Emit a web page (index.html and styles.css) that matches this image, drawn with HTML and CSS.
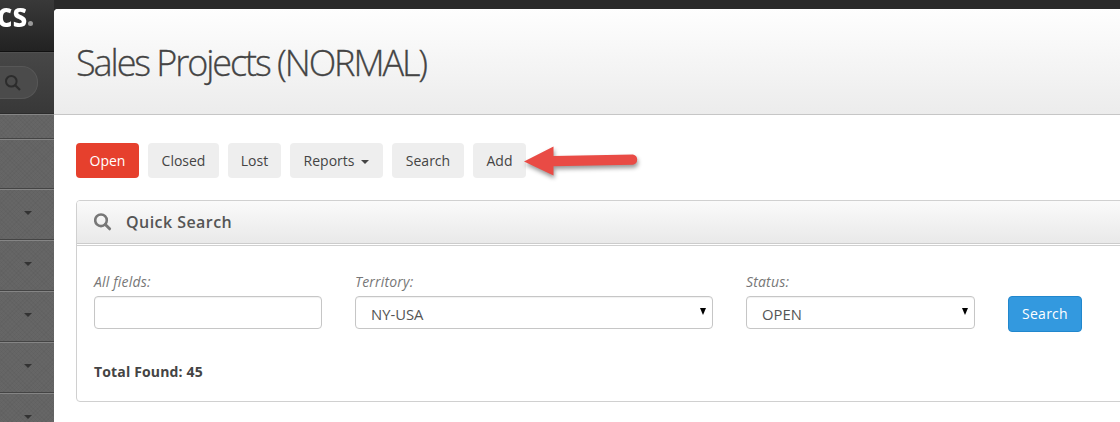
FILE: index.html
```html
<!DOCTYPE html>
<html lang="en">
<head>
<meta charset="utf-8">
<title>Sales Projects</title>
<link rel="stylesheet" href="styles.css">
</head>
<body>
<aside class="sidebar">
  <div class="brand"><span class="brand-name">cs</span><span class="brand-dot"></span></div>
  <div class="side-search">
    <div class="side-pill">
      <svg width="18" height="18" viewBox="0 0 18 18"><circle cx="7.3" cy="7.3" r="5.3" fill="none" stroke="#2c2c2c" stroke-width="2"/><path d="M11.2 11.2L16 16" stroke="#2c2c2c" stroke-width="2.2"/></svg>
    </div>
  </div>
  <nav class="side-nav">
    <div class="side-item side-item-first"></div>
    <div class="side-item side-item-short"></div>
    <div class="side-item"><i class="side-caret"></i></div>
    <div class="side-item"><i class="side-caret"></i></div>
    <div class="side-item"><i class="side-caret"></i></div>
    <div class="side-item"><i class="side-caret"></i></div>
    <div class="side-item"><i class="side-caret"></i></div>
  </nav>
</aside>
<main class="content">
  <header class="page-header"><h1 class="page-title">Sales Projects (NORMAL)</h1></header>
  <div class="toolbar">
    <a class="btn btn-active w-open">Open</a>
    <a class="btn w-closed">Closed</a>
    <a class="btn w-lost">Lost</a>
    <a class="btn w-reports">Reports<i class="caret"></i></a>
    <a class="btn w-search">Search</a>
    <a class="btn w-add">Add
      <svg class="arrow" width="120" height="40" viewBox="0 0 120 40"><path d="M1 18.5L30.500 3.500V13.100L110 11.500A5.200 5.200 0 0 1 110 21.700L30.500 23.200V32.500Z" fill="#e94b45"/></svg>
    </a>
  </div>
  <section class="panel">
    <div class="panel-head">
      <svg class="panel-icon" width="18" height="18" viewBox="0 0 18 18"><circle cx="7" cy="7.300" r="5.800" fill="none" stroke="#777" stroke-width="2.600"/><path d="M11.300 11.500L15.600 15.800" stroke="#777" stroke-width="3" stroke-linecap="round"/></svg>
      <span class="panel-title">Quick Search</span>
    </div>
    <div class="panel-body">
      <div class="fields">
        <div class="field f-all"><span class="label">All fields:</span><div class="control"></div></div>
        <div class="field f-territory"><span class="label">Territory:</span><div class="control"><span class="value">NY-USA</span><i class="tri"></i></div></div>
        <div class="field f-status"><span class="label">Status:</span><div class="control"><span class="value">OPEN</span><i class="tri"></i></div></div>
        <button class="submit">Search</button>
      </div>
      <div class="total">Total Found: 45</div>
    </div>
  </section>
</main>
</body>
</html>
```
FILE: styles.css
```css
* { box-sizing: border-box; }
body {
  margin: 0;
  height: 422px;
  overflow: hidden;
  display: flex;
  background: #292929;
  font: 14px/20px "Open Sans", "Noto Sans", sans-serif;
  color: #444;
}
.sidebar { width: 54px; height: 422px; flex: none; overflow: hidden; }
.brand {
  height: 52px;
  display: flex;
  align-items: flex-start;
  background: linear-gradient(#393939, #222);
  border-bottom: 1px solid #111;
  color: #fff;
}
.brand-name {
  width: 32px;
  margin-left: -3px;
  font-size: 34px;
  line-height: 28px;
  font-weight: 700;
  transform: scaleX(.88);
  transform-origin: left;
}
.brand-dot { width: 5px; height: 5px; margin: 21px 0 0 -1px; border-radius: 50%; background: #999; }
.side-search {
  height: 62px;
  padding-top: 13px;
  background: linear-gradient(#474747, #383838);
  border-top: 1px solid #505050;
  border-bottom: 1px solid #2c2c2c;
}
.side-pill {
  width: 38px;
  height: 33px;
  padding: 7px 0 0 4px;
  background: #4b4b4b;
  border: 1px solid #575757;
  border-left: 0;
  border-radius: 0 16px 16px 0;
}
.side-pill svg { display: block; }
.side-nav {
  background-color: #666;
  background-image: repeating-linear-gradient(45deg, rgba(0,0,0,.03) 0 1px, transparent 1px 3px), repeating-linear-gradient(-45deg, rgba(0,0,0,.03) 0 1px, transparent 1px 3px);
}
.side-item {
  height: 51px;
  border-top: 1px solid #858585;
  border-bottom: 1px solid #444;
  padding: 21px 0 0 24px;
}
.side-item-first { height: 25px; padding: 0; }
.side-item-short { height: 50px; }
.side-caret { display: block; width: 8px; border: 4px solid transparent; border-top-color: #333; border-bottom: 0; }
.content {
  flex: 1;
  min-width: 0;
  height: 413px;
  margin-top: 9px;
  background: #fff;
  border-top-left-radius: 4px;
  overflow: hidden;
}
.page-header {
  height: 106px;
  padding: 29px 0 0 22px;
  background: linear-gradient(#fefefe, #ececec);
  border-bottom: 1px solid #c6c6c6;
}
.page-title { margin: 0; font-size: 36px; line-height: 49px; font-weight: 300; letter-spacing: -2.07px; white-space: nowrap; -webkit-text-stroke: .3px #444; }
.toolbar { display: flex; padding: 28px 0 0 22px; }
.btn {
  position: relative;
  height: 35px;
  line-height: 35px;
  margin-right: 9px;
  text-align: center;
  border-radius: 4px;
  background: #eee;
}
.btn-active { background: #e6402d; color: #fff; }
.w-open { width: 63px; }
.w-closed { width: 71px; }
.w-lost { width: 53px; }
.w-reports { width: 93px; }
.w-search { width: 72px; }
.w-add { width: 53px; }
.caret { display: inline-block; margin-left: 7px; vertical-align: 2px; border: 4px solid transparent; border-top-color: #444; border-bottom: 0; }
.arrow { position: absolute; left: 50px; top: 0; filter: drop-shadow(1px 3px 2px rgba(0,0,0,.4)); }
.panel { margin: 22px -4px 0 22px; border: 1px solid #d0d0d0; border-radius: 4px; height: 202px; }
.panel-head {
  height: 43px;
  display: flex;
  align-items: center;
  padding-left: 17px;
  background: linear-gradient(#fafafa, #e9e9e9);
  border-bottom: 1px solid #ccc;
  border-radius: 3px 3px 0 0;
}
.panel-icon { margin-right: 14px; }
.panel-title { font-size: 16px; font-weight: 600; letter-spacing: .45px; color: #555; }
.panel-body { margin-top: 1px; padding: 26px 0 0 17px; border-top: 1px solid #d0d0d0; }
.fields { display: flex; align-items: flex-end; height: 60px; }
.field { margin-right: 33px; height: 60px; }
.f-all { width: 228px; }
.f-territory { width: 358px; }
.f-status { width: 229px; }
.label { display: block; height: 24px; font-style: italic; letter-spacing: .18px; color: #777; }
.control {
  height: 33px;
  display: flex;
  justify-content: space-between;
  padding: 7px 6px 0 15px;
  border: 1px solid #c6c6c6;
  border-radius: 4px;
  box-shadow: inset 0 1px 1px rgba(0,0,0,.06);
  color: #555;
}
.value { font-size: 14.8px; }
.tri { width: 6px; height: 7px; margin-top: 4px; background: #000; clip-path: polygon(0 0, 100% 0, 50% 100%); }
.submit {
  width: 74px;
  height: 36px;
  padding: 0;
  border: 1px solid #2187cd;
  border-radius: 4px;
  background: #3399df;
  color: #fff;
  font: 14px/20px "Open Sans", "Noto Sans", sans-serif;
  letter-spacing: .25px;
}
.total { margin-top: 30px; font-weight: 700; letter-spacing: .16px; }
```
